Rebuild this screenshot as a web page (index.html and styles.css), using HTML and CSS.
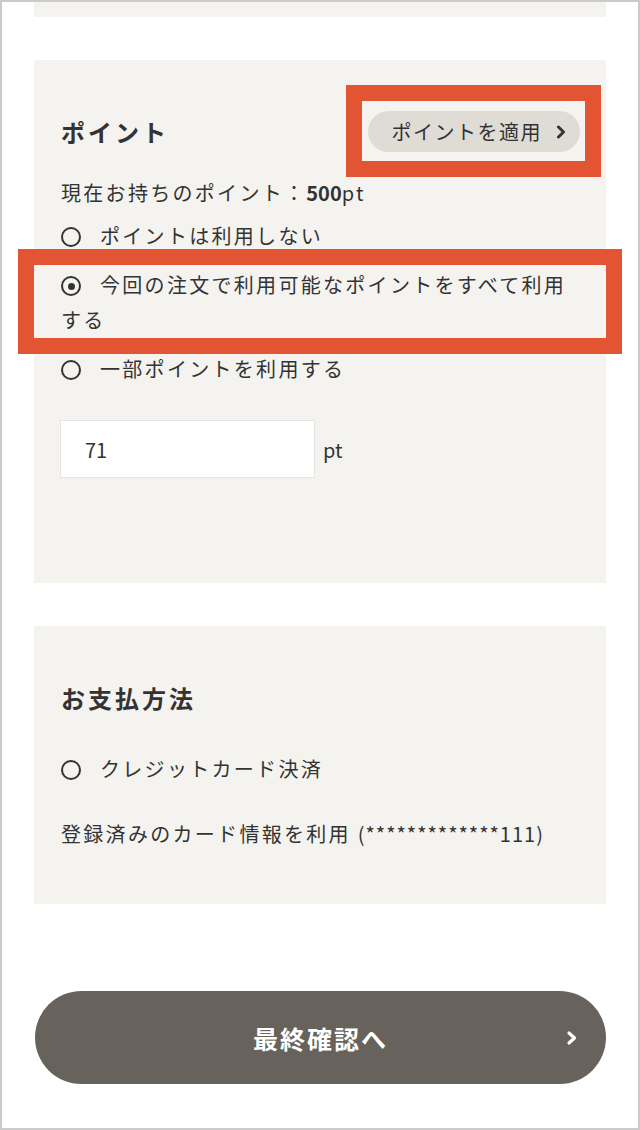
FILE: index.html
```html
<!DOCTYPE html>
<html lang="ja">
<head>
    <meta charset="UTF-8">
    <meta name="viewport" content="width=device-width, initial-scale=1.0">
    <title>お支払い</title>
    <link rel="stylesheet" href="styles.css">
</head>
<body>
    <div class="frame">
        <div class="card card-top"></div>

        <section class="card card-point">
            <div class="card-head">
                <h2>ポイント</h2>
                <button type="button" class="apply-btn">ポイントを適用
                    <svg class="chev" width="10" height="14" viewBox="0 0 10 14"><polyline points="2.5,2 7.5,7 2.5,12" fill="none" stroke="#333" stroke-width="3" stroke-linecap="round" stroke-linejoin="round"/></svg>
                </button>
            </div>
            <p class="owned">現在お持ちのポイント：<b>500</b>pt</p>
            <label class="radio"><span class="circle"></span>ポイントは利用しない</label>
            <label class="radio"><span class="circle checked"></span>今回の注文で利用可能なポイントをすべて利用する</label>
            <label class="radio"><span class="circle"></span>一部ポイントを利用する</label>
            <div class="point-input">
                <input type="text" value="71">
                <span>pt</span>
            </div>
        </section>

        <section class="card card-pay">
            <h2>お支払方法</h2>
            <label class="radio"><span class="circle"></span>クレジットカード決済</label>
            <p class="card-info">登録済みのカード情報を利用 <span class="card-no">(*************111)</span></p>
        </section>

        <button type="button" class="next-btn">最終確認へ
            <svg class="chev-white" width="12" height="16" viewBox="0 0 12 16"><polyline points="3,3 8.5,8 3,13" fill="none" stroke="#fff" stroke-width="3.2" stroke-linecap="round" stroke-linejoin="round"/></svg>
        </button>

        <!-- 注目枠 -->
        <div class="mark mark-apply"></div>
        <div class="mark mark-all"></div>
    </div>
</body>
</html>
```

FILE: styles.css
```css
body {
    margin: 0;
    font-family: "Noto Sans CJK JP", sans-serif;
    color: #333;
    background-color: #fff;
}
.frame {
    position: relative;
    width: 640px;
    height: 1130px;
    box-sizing: border-box;
    border: 2px solid #cbcbcb;
    padding: 0 32px;
    overflow: hidden;
}
.card {
    background-color: #f5f3ef;
}
.card-top {
    height: 15px;
    margin-bottom: 43px;
}
h2 {
    margin: 0;
    font-size: 24px;
    font-weight: bold;
    letter-spacing: 3px;
    line-height: 35px;
}
.card-point {
    padding: 51px 27px 105px;
}
.card-head {
    display: flex;
    justify-content: space-between;
    align-items: center;
}
.apply-btn {
    display: flex;
    align-items: center;
    height: 41px;
    margin-right: -1px;
    padding: 0 14px 0 24px;
    border: none;
    border-radius: 21px;
    background-color: #dfdcd6;
    color: #333;
    font-family: inherit;
    font-size: 20px;
    letter-spacing: 1.5px;
}
.apply-btn .chev {
    margin-left: 14px;
}
.owned,
.card-info {
    margin: 23px 0 0;
    font-size: 20px;
    line-height: 35px;
    letter-spacing: 2.3px;
}
.owned b {
    letter-spacing: 0;
}
.card-no {
    letter-spacing: 1px;
}
.radio {
    display: block;
    margin-top: 14px;
    font-size: 20px;
    line-height: 35px;
    letter-spacing: 2.3px;
}
.owned + .radio {
    margin-top: 8px;
}
.circle {
    display: inline-block;
    position: relative;
    width: 20px;
    height: 20px;
    box-sizing: border-box;
    border: 2px solid #333;
    border-radius: 50%;
    margin-right: 19px;
    vertical-align: -3px;
}
.circle.checked::after {
    content: "";
    position: absolute;
    left: 4.5px;
    top: 4.5px;
    width: 7px;
    height: 7px;
    border-radius: 50%;
    background-color: #333;
}
.point-input {
    display: flex;
    align-items: center;
    margin-top: 34px;
}
.point-input input {
    width: 255px;
    height: 58px;
    box-sizing: border-box;
    margin: 0 0 0 -1px;
    padding: 0 24px;
    border: 1px solid #e6e4e0;
    background-color: #fff;
    font-family: inherit;
    font-size: 20px;
    color: #333;
}
.point-input span {
    margin-left: 8px;
    font-size: 20px;
}
.card-pay {
    margin-top: 43px;
    padding: 54px 27px 53px;
}
.card-pay .radio {
    margin-top: 36px;
}
.card-info {
    margin-top: 30px;
}
.next-btn {
    position: relative;
    display: flex;
    align-items: center;
    justify-content: center;
    width: 571px;
    height: 93px;
    margin: 87px 0 0 1px;
    border: none;
    border-radius: 47px;
    background-color: #67625b;
    color: #fff;
    font-family: inherit;
    font-size: 25px;
    font-weight: bold;
    letter-spacing: 2px;
}
.chev-white {
    position: absolute;
    right: 28px;
    top: 39px;
}
.mark {
    position: absolute;
    box-sizing: border-box;
    border: 16px solid #e35432;
}
.mark-apply {
    left: 344px;
    top: 83px;
    width: 255px;
    height: 92px;
}
.mark-all {
    left: 16px;
    top: 247px;
    width: 604px;
    height: 105px;
}
```
